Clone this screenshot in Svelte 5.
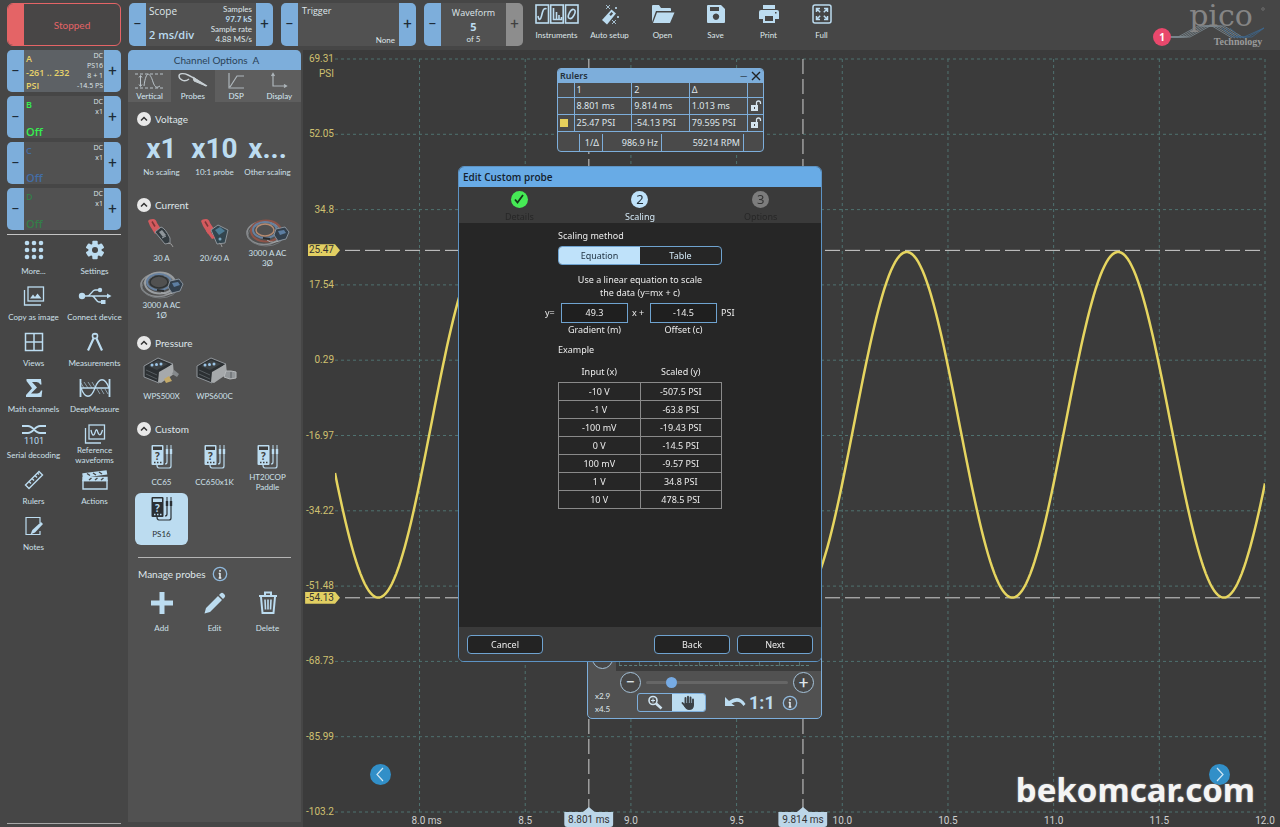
<script>
  const channels = [
    { id: 'A', range: '-261 .. 232', state: 'PSI', info: ['DC', 'PS16', '8 + 1', '-14.5 PS'], color: '#e8d36a', on: true },
    { id: 'B', range: '', state: 'Off', info: ['DC', 'x1'], color: '#37ee50' },
    { id: 'C', range: '', state: 'Off', info: ['DC', 'x1'], color: '#446da6' },
    { id: 'D', range: '', state: 'Off', info: ['DC', 'x1'], color: '#357d49' }
  ];
  const tools = [
    ['instruments', 'Instruments'], ['wand', 'Auto setup'], ['folder', 'Open'],
    ['save', 'Save'], ['print', 'Print'], ['full', 'Full']
  ];
  const side = [
    ['more', 'More...'], ['gear', 'Settings'], ['copy', 'Copy as image'], ['usb', 'Connect device'],
    ['views', 'Views'], ['compass', 'Measurements'], ['sigma', 'Math channels'], ['deep', 'DeepMeasure'],
    ['serial', 'Serial decoding'], ['refwave', 'Reference\nwaveforms'], ['ruler', 'Rulers'],
    ['clapper', 'Actions'], ['notes', 'Notes']
  ];
  const tabs = [['vertical', 'Vertical'], ['probe', 'Probes'], ['dsp', 'DSP'], ['display', 'Display']];
  const sections = [
    { title: 'Voltage', items: [['x1', 'No scaling'], ['x10', '10:1 probe'], ['x...', 'Other scaling']], text: true },
    { title: 'Current', items: [['clampA', '30 A'], ['clampB', '20/60 A'], ['coil3', '3000 A AC\n3Ø'], ['coil1', '3000 A AC\n1Ø']] },
    { title: 'Pressure', items: [['wps5', 'WPS500X'], ['wps6', 'WPS600C']] },
    { title: 'Custom', items: [['meter', 'CC65'], ['meter', 'CC650x1K'], ['meter', 'HT20COP\nPaddle'], ['meter', 'PS16', true]] }
  ];
  const example = [
    ['-10 V', '-507.5 PSI'], ['-1 V', '-63.8 PSI'], ['-100 mV', '-19.43 PSI'], ['0 V', '-14.5 PSI'],
    ['100 mV', '-9.57 PSI'], ['1 V', '34.8 PSI'], ['10 V', '478.5 PSI']
  ];

  const t0 = 7.6, t1 = 12.0;
  const yLabels = ['69.31', '52.05', '34.8', '17.54', '0.29', '-16.97', '-34.22', '-51.48', '-68.73', '-85.99', '-103.2'];
  const xLabels = ['8.0 ms', '8.5', '9.0', '9.5', '10.0', '10.5', '11.0', '11.5', '12.0'];
  const xPos = (t) => ((t - t0) / (t1 - t0)) * 100;
  const yPos = (v) => ((69.31 - v) / (69.31 + 103.2)) * 100;
  const timeRulers = [[8.801, '8.801 ms'], [9.814, '9.814 ms']];
  const valueRulers = [[25.47, '25.47'], [-54.13, '-54.13']];

  let wave = '';
  for (let i = 0; i <= 440; i++) {
    const t = t0 + (i / 440) * (t1 - t0);
    const v = -14.5 - 39.6 * Math.cos((2 * Math.PI * (t - 7.805)));
    wave += (i ? 'L' : 'M') + (xPos(t) * 10).toFixed(2) + ' ' + (yPos(v) * 10).toFixed(2);
  }

  let gradient = $state('49.3');
  let offset = $state('-14.5');
  let zoom = $state(15);
</script>

{#snippet icon(name)}
  {#if name === 'instruments'}
    <svg class="ic" width="44" height="20" viewBox="0 0 44 20" fill="none" stroke="#bcdcf0" stroke-width="1.6">
      <rect x="1" y="1" width="12.5" height="18" /><rect x="15.7" y="1" width="12.5" height="18" /><rect x="30.5" y="1" width="12.5" height="18" />
      <path d="M3 12c1 5 2.500 4 3.500 0s2-9 5-7M18.500 4v12M21.500 8v8M24 11v5M26.500 13v3M18 15.500h9" /><ellipse cx="36.700" cy="10" rx="2.600" ry="5" transform="rotate(28 36.700 10)" />
    </svg>
  {:else if name === 'wand'}
    <svg class="ic" width="20" height="22" viewBox="0 0 20 22" fill="#bcdcf0" stroke="#bcdcf0">
      <path d="M11.500 5.500l4.500 4L7 20.500l-5-4.500z" stroke="none" /><path d="M11.500 8l1.600 1.400-2.200 2.600-1.600-1.400z" fill="#464646" stroke="none" />
      <path d="M6 1l4 4M10 1L6 5M15 3l2 2M17 3l-2 2M12 16l4 4M16 16l-4 4M17 12l2 2M19 12l-2 2" fill="none" stroke-width=".8" />
    </svg>
  {:else if name === 'folder'}
    <svg class="ic" width="24" height="20" viewBox="0 0 24 20" fill="#bcdcf0"><path d="M1 18V2q0-1 1-1h6l2 3h9q1 0 1 1v2H5zM6 8.500h17.500L19 19H2z" /></svg>
  {:else if name === 'save'}
    <svg class="ic" width="20" height="20" viewBox="0 0 20 20"><path fill="#bcdcf0" fill-rule="evenodd" d="M1 2q0-1 1-1h13l4 4v13q0 1-1 1H2q-1 0-1-1zM4 3v4h9V3zM10 9.500a3.200 3.200 0 1 0 .01 0z" /></svg>
  {:else if name === 'print'}
    <svg class="ic" width="20" height="20" viewBox="0 0 20 20"><path fill="#bcdcf0" fill-rule="evenodd" d="M4 1h12v4H4zM2 6h16q2 0 2 2v7h-4v4H4v-4H0V8q0-2 2-2zM6 12v5h8v-5zM16 8v1.500h1.500V8z" /></svg>
  {:else if name === 'full'}
    <svg class="ic" width="20" height="20" viewBox="0 0 20 20" fill="none" stroke="#bcdcf0" stroke-width="1.500"><rect x="1" y="1" width="18" height="18" rx="2" /><path d="M4.500 8V4.500H8M12 4.500h3.500V8M15.500 12v3.500H12M8 15.500H4.500V12M5 5l3.200 3.200M15 5l-3.200 3.200M15 15l-3.200-3.200M5 15l3.200-3.200" /></svg>
  {:else if name === 'more'}
    <svg class="ic" width="20" height="20" viewBox="0 0 20 20" fill="#bcdcf0">{#each [3, 10, 17] as cx}{#each [3, 10, 17] as cy}<circle {cx} {cy} r="2.300" />{/each}{/each}</svg>
  {:else if name === 'gear'}
    <svg class="ic" width="20" height="20" viewBox="0 0 20 20"><g fill="#bcdcf0">{#each [0, 60, 120] as a}<rect x="7.300" y=".8" width="5.400" height="18.400" rx="1" transform="rotate({a} 10 10)" />{/each}<circle cx="10" cy="10" r="6.600" /></g><circle cx="10" cy="10" r="3" fill="#464646" /></svg>
  {:else if name === 'copy'}
    <svg class="ic" width="22" height="20" viewBox="0 0 22 20" fill="none" stroke="#bcdcf0" stroke-width="1.300"><rect x="5" y="1" width="15.500" height="14" /><path d="M1.500 4v15H18" /><path d="M7 12.500l3-4 2 2.500 2.500-3.500 4 5z" fill="#bcdcf0" stroke="none" /></svg>
  {:else if name === 'usb'}
    <svg class="ic" width="34" height="20" viewBox="0 0 34 20" fill="none" stroke="#bcdcf0" stroke-width="1.400"><path d="M4 10h26M9 10c4 0 5-6 8-6h5M14 10c3 0 4 6 7 6h4" /><g fill="#bcdcf0" stroke="none"><circle cx="4" cy="10" r="3.200" /><path d="M29 7.500l4.500 2.500-4.500 2.500z" /><circle cx="22" cy="4" r="2.200" /><rect x="23" y="14" width="4.500" height="4" /></g></svg>
  {:else if name === 'views'}
    <svg class="ic" width="20" height="20" viewBox="0 0 20 20" fill="none" stroke="#bcdcf0" stroke-width="1.500"><path d="M1.500 1.500h17v17h-17zM10 1.500v17M1.500 10h17" /></svg>
  {:else if name === 'compass'}
    <svg class="ic" width="20" height="20" viewBox="0 0 20 20" fill="none" stroke="#bcdcf0" stroke-width="1.600"><circle cx="10" cy="4" r="2.500" /><path d="M8.500 6.500L3 18.500M11.500 6.500L17 18.500" stroke-width="2.200" /><path d="M10 1v2" /></svg>
  {:else if name === 'sigma'}
    <svg class="ic" width="20" height="20" viewBox="0 0 20 20" fill="#bcdcf0"><path d="M2.500 1H17l.5 5.500h-1.300Q15.500 4 12.500 4H8l5 5.500L7 15.500h6q3 0 4-3h1.300L17.500 19H2v-2l6-6.800L2.500 3z" /></svg>
  {:else if name === 'deep'}
    <svg class="ic" width="32" height="20" viewBox="0 0 32 20" fill="none" stroke="#bcdcf0" stroke-width="1.300"><path d="M1.500 1v18M30.500 1v18" stroke-width="1.800" /><path d="M1.500 10h29M2 10c4 11 10 11 14 0S26-1 30 10" /><path d="M5 4l4 6M9 4l4 6M13 4l3 5M18 11l3 5M22 11l3 5M26 11l3 5M2 5l3 5" stroke-width=".6" /></svg>
  {:else if name === 'serial'}
    <svg class="ic" width="26" height="22" viewBox="0 0 26 22" fill="none" stroke="#bcdcf0" stroke-width="1.800"><path d="M1 3h6c5 0 7 7 12 7h6M1 10h6c5 0 7-7 12-7h6" /><text x="13" y="21" text-anchor="middle" font-size="9" font-family="Roboto, sans-serif" fill="#bcdcf0" stroke="none">1101</text></svg>
  {:else if name === 'refwave'}
    <svg class="ic" width="22" height="20" viewBox="0 0 22 20" fill="none" stroke="#bcdcf0" stroke-width="1.300"><rect x="5" y="1" width="15.500" height="14" /><path d="M1.500 4v15H17M7 6c1.500 7 3 6 4.200 2 .8-3 1.800-3 2.600 0 1.200 4 3 4 4.700-2" /></svg>
  {:else if name === 'ruler'}
    <svg class="ic" width="20" height="20" viewBox="0 0 20 20" fill="none" stroke="#bcdcf0" stroke-width="1.400"><path d="M15 1.500l3.500 3.500L5 18.500 1.500 15zM5 11.500l2 2M8 8.500l2 2M11 5.500l2 2M13.500 3l1.500 1.500" /></svg>
  {:else if name === 'clapper'}
    <svg class="ic" width="26" height="20" viewBox="0 0 26 20" fill="none" stroke="#bcdcf0" stroke-width="1.400"><path d="M1 10.500h24v8.500H1z" /><path d="M1 7.500h24v3H1zM1 4l23-3 .5 3L1.500 7z" fill="#bcdcf0" /><path d="M5 3.500l3 2M11 3l3 2M17 2l3 2M7 10l2.500-2M13 10l2.500-2M19 10l2.500-2" stroke="#464646" /></svg>
  {:else if name === 'notes'}
    <svg class="ic" width="20" height="20" viewBox="0 0 20 20" fill="none" stroke="#bcdcf0" stroke-width="1.200"><path d="M16 7V1.500H2v17h14V15" /><path d="M17 6l2 2-8 8.500-4.500 2 1.800-4.500z" fill="#bcdcf0" stroke="none" /></svg>
  {:else if name === 'vertical'}
    <svg class="ic" width="32" height="18" viewBox="0 0 32 18" fill="none" stroke="#b9c2c8"><path d="M1 2h30M1 16h30" stroke-dasharray="3 2" /><path d="M6.500 4v10M5 5.500L6.500 3.500 8 5.500M5 12.500l1.500 2 1.500-2M10 14c2-16 6-14 9-4 2 6 4 6 7 4" /></svg>
  {:else if name === 'probe'}
    <svg class="ic" width="32" height="18" viewBox="0 0 32 18" fill="none" stroke="#c8d0d4"><path d="M12 7C7 11 2 7 2 4s5-3 9-1l6 3 13 8" stroke-width="1.400" /><path d="M16 5l13 9-12-5z" fill="#c8d0d4" /></svg>
  {:else if name === 'dsp'}
    <svg class="ic" width="20" height="18" viewBox="0 0 20 18" fill="none" stroke="#aeb6bb" stroke-width="1.200"><path d="M3 1v15h15M4 15L11 4h7" /></svg>
  {:else if name === 'display'}
    <svg class="ic" width="20" height="18" viewBox="0 0 20 18" fill="none" stroke="#aeb6bb" stroke-width="1.200"><path d="M4 2v12h13M2.500 4L4 1.500 5.500 4M15 12.500l2.500 1.500-2.500 1.500" /></svg>
  {:else if name === 'clampA' || name === 'clampB'}
    <svg class="ic" width="34" height="30" viewBox="0 0 34 30" fill="none">
      <path d="M3 3q1-2 5-2 3 0 4 4l4 6-6 5-5-8z" fill="#d45a5e" /><path d="M7 3.500l3 5" stroke="#7c3638" stroke-width="1.500" />
      {#if name === 'clampA'}
        <path d="M10 14l6-5q4 1 9 11v5l-5 1z" fill="#333b40" stroke="#8e9499" /><path d="M14 14l3-2 4 5-3 2z" fill="#8f969b" /><path d="M17 20l4-2" stroke="#9aa2a8" /><path d="M23 25q4 0 5 4" stroke="#999" />
      {:else}
        <path d="M13 12l7-5 10 5-3 13-8 1z" fill="#33454e" stroke="#8e9499" /><path d="M17 12l5-3 5 4-6 4z" fill="#4d7c95" /><path d="M9 9l8 11-3 1-6-8z" fill="#d45a5e" /><circle cx="22" cy="21" r="1.500" fill="#7ba5bd" /><path d="M21 25q3 1 3 4" stroke="#999" />
      {/if}
    </svg>
  {:else if name === 'coil3' || name === 'coil1'}
    <svg class="ic" width="46" height="30" viewBox="0 0 46 30" fill="none">
      <ellipse cx="19" cy="15" rx="17" ry="11.500" stroke="#8b8e91" stroke-width="1.600" /><ellipse cx="21" cy="17" rx="18" ry="11" stroke="#74787b" />
      <ellipse cx="21" cy="13" rx="15" ry="10.500" stroke={name === 'coil3' ? '#8d5348' : '#999da0'} stroke-width="2" /><ellipse cx="20" cy="12" rx="12" ry="8" stroke="#66809f" stroke-width="2" />
      <ellipse cx="20" cy="12" rx="9" ry="6" stroke={name === 'coil3' ? '#b58a70' : '#2f3335'} stroke-width="1.500" /><path d="M22 22q6 5 16-1" stroke="#a4a7a9" />
      <path d="M31 11l9-2 4 5-3 7-8 2-4-6z" fill="#33404d" stroke="#87919b" /><path d="M33 13l6-1 2 3-6 2z" fill="#5d7ea2" /><path d="M18 20l7 1" stroke="#292c2e" stroke-width="2" />
    </svg>
  {:else if name === 'wps5' || name === 'wps6'}
    <svg class="ic" width="44" height="28" viewBox="0 0 44 28" fill="none">
      <path d="M4 9L18 1l15 6-12 9-2 10L4 20z" fill="#2c3033" stroke="#90959a" /><path d="M19 15l14-8 1 10-13 9-3-1z" fill="#a6a9ab" /><path d="M8 9L18 3l10 4-11 6z" fill="#3d4245" />
      <circle cx="12" cy="8" r="1.500" fill="#9bc4e6" /><circle cx="16.500" cy="7.500" r="1.500" fill="#9bc4e6" /><circle cx="21" cy="7" r="1.500" fill="#9bc4e6" />
      {#if name === 'wps5'}<path d="M34 13l5 4-2 3-5-3z" fill="#85898c" /><path d="M24 22l5-3 3 5-6 2z" fill="#c4aa68" />{:else}<path d="M33 14l5 0 5 1v6l-6 1-6-2z" fill="#93979a" stroke="#b5b8ba" /><path d="M38 15v6" stroke="#5d6164" />{/if}
      <path d="M6 13l11 5M6 17l11 5" stroke="#555b5f" />
    </svg>
  {:else if name === 'meter'}
    <svg class="ic" width="22" height="26" viewBox="0 0 22 26" fill="none" stroke="currentColor">
      <rect x=".5" y="1" width="12" height="20" rx="1" fill="currentColor" stroke="none" /><rect x="2" y="2.500" width="9" height="3.500" fill="var(--cut)" stroke="none" />
      <text x="6.500" y="15.500" text-anchor="middle" font-size="10" font-weight="700" font-family="Open Sans, sans-serif" fill="var(--cut)" stroke="none">?</text>
      <path d="M3 18.500h1.500M6 18.500h1.500M9 18.500h1.500" stroke="var(--cut)" stroke-width="1.500" /><path d="M16 1v6M20 1v6" /><path d="M16 5v5M20 5v5" stroke-width="2.400" />
      <path d="M16 10v8q0 2-2 2M20 10v12q0 2-2 2H8q-2 0-2-3" stroke-width="1.200" />
    </svg>
  {:else if name === 'plus'}
    <svg class="ic" width="22" height="22" viewBox="0 0 22 22"><path d="M8.500 0h5v8.500H22v5h-8.500V22h-5v-8.500H0v-5h8.500z" fill="#bcdcf0" /></svg>
  {:else if name === 'pencil'}
    <svg class="ic" width="22" height="22" viewBox="0 0 22 22" fill="#bcdcf0"><path d="M14 4l4 4L6 20l-5.500 1.500L2 16zM15 3l1.500-1.500Q18 0 19.500 1.500l1 1Q22 4 20.500 5.500L19 7z" /></svg>
  {:else if name === 'bin'}
    <svg class="ic" width="20" height="24" viewBox="0 0 20 24" fill="none" stroke="#bcdcf0" stroke-width="2"><path d="M1 5h18M7 4V1.500h6V4M3 6l1.500 16h11L17 6" /><path d="M7 8.500l.5 10M10 8.500v10M13 8.500l-.5 10" stroke-width="1.600" /></svg>
  {:else if name === 'info'}
    <svg class="ic" width="16" height="16" viewBox="0 0 16 16" fill="none"><circle cx="8" cy="8" r="6.700" stroke="#8fb8dc" stroke-width="1.300" /><path d="M8 7v5M8 4v1.800M6.700 12h2.600M6.700 7.500H8" stroke="#e6eef3" stroke-width="1.500" /></svg>
  {:else if name === 'lock'}
    <svg class="ic" width="12" height="12" viewBox="0 0 12 12"><path d="M1 5h7v6H1z" fill="#d5e4ee" /><path d="M6.500 5V3q0-2 2-2t2 2v1" fill="none" stroke="#d5e4ee" stroke-width="1.300" /><path d="M4.500 7v2" stroke="#444" /></svg>
  {/if}
{/snippet}

{#snippet stepper(dir, label, tone)}
  <button class="step {tone ?? ''}" aria-label={label}>{dir === 'up' ? '+' : '−'}</button>
{/snippet}

<div class="app">
  <header class="top">
    <button class="stopped"><i></i><span>Stopped</span></button>
    <div class="box scope">
      {@render stepper('down', 'Shorter timebase')}
      <div class="scope-main"><span>Scope</span><b>2 ms/div</b></div>
      <div class="scope-info"><span>Samples</span><b>97.7 kS</b><span>Sample rate</span><span>4.88 MS/s</span></div>
      {@render stepper('up', 'Longer timebase')}
    </div>
    <div class="box trigger">
      {@render stepper('down', 'Previous trigger')}
      <div class="trigger-main"><span>Trigger</span><small>None</small></div>
      {@render stepper('up', 'Next trigger')}
    </div>
    <div class="box waveform">
      {@render stepper('down', 'Previous waveform')}
      <div class="waveform-main"><span>Waveform</span><b>5</b><small>of 5</small></div>
      {@render stepper('up', 'Next waveform', 'grey')}
    </div>
    <nav class="tools">
      {#each tools as [name, label]}
        <button class="tool">{@render icon(name)}<span>{label}</span></button>
      {/each}
    </nav>
    <div class="brand">
      <b class="count">1</b>
      <span class="pico">pico</span>
      <svg width="112" height="46" viewBox="0 0 112 46" fill="none">
        <g stroke-width=".8">
          {#each [0, 3, 6, 9, 12] as d}<path d="M8 34H{18 + d}L{38 + d} 23H{52 + d}L{72 + d} 35" stroke="#7e8b93" />{/each}
          {#each [0, 4, 8] as d}<path d="M{62 + d} 25L{72 + d} 34H{84 + d}L104 25" stroke="#3c668c" />{/each}
        </g>
        <text x="78" y="42" text-anchor="middle" font-family="Liberation Serif, serif" font-weight="700" font-size="10" fill="#9a9a9a">Technology</text>
        <circle cx="103" cy="6" r="1.300" stroke="#858585" stroke-width=".6" />
      </svg>
    </div>
  </header>

  <aside class="left">
    <div class="channels">
      {#each channels as c}
        <div class="box channel" class:on={c.on} style="--tone: {c.color}">
          {@render stepper('down', `Channel ${c.id} range down`)}
          <div class="ch-main"><b>{c.id}</b>{#if c.range}<b>{c.range}</b>{/if}<b class:off={c.state === 'Off'}>{c.state}</b></div>
          <div class="ch-info">{#each c.info as line}<span>{line}</span>{/each}</div>
          {@render stepper('up', `Channel ${c.id} range up`)}
        </div>
      {/each}
    </div>
    <nav class="side">
      {#each side as [name, label]}
        <button class="side-item"><span class="side-icon">{@render icon(name)}</span><span class="cap">{label}</span></button>
      {/each}
    </nav>
  </aside>

  <section class="options">
    <h2>Channel Options&nbsp; A</h2>
    <div class="tabs">
      {#each tabs as [name, label]}
        <button class="tab" class:active={name === 'probe'}>{@render icon(name)}<span>{label}</span></button>
      {/each}
    </div>
    <div class="groups">
      {#each sections as s}
        <section>
          <h3><button class="fold" aria-label="Collapse {s.title}"><svg width="14" height="14" viewBox="0 0 14 14"><circle cx="7" cy="7" r="7" fill="#e8e8e8" /><path d="M4 8.500l3-3 3 3" fill="none" stroke="#333" stroke-width="1.500" /></svg></button>{s.title}</h3>
          <div class="items">
            {#each s.items as [name, label, picked]}
              <button class="item" class:picked>
                <span class="item-icon" class:big={s.text}>{#if s.text}{name}{:else}{@render icon(name)}{/if}</span>
                <span class="cap">{label}</span>
              </button>
            {/each}
          </div>
        </section>
      {/each}
    </div>
    <div class="manage">
      <h3>Manage probes {@render icon('info')}</h3>
      <div class="items">
        {#each [['plus', 'Add'], ['pencil', 'Edit'], ['bin', 'Delete']] as [name, label]}
          <button class="item"><span class="item-icon">{@render icon(name)}</span><span class="cap">{label}</span></button>
        {/each}
      </div>
    </div>
  </section>

  <main class="chart">
    <div class="plot">
      <svg class="grid" width="100%" height="100%">
        {#each yLabels as _, i}<line x1="0" x2="100%" y1="{i * 10}%" y2="{i * 10}%" />{/each}
        {#each xLabels as _, i}<line y1="0" y2="100%" x1="{xPos(8 + i / 2)}%" x2="{xPos(8 + i / 2)}%" />{/each}
        {#each valueRulers as [v]}<line class="rule" x1="10" x2="100%" y1="{yPos(v)}%" y2="{yPos(v)}%" />{/each}
        {#each timeRulers as [t]}<line class="rule" y1="0" y2="100%" x1="{xPos(t)}%" x2="{xPos(t)}%" />{/each}
        <svg width="100%" height="100%" viewBox="0 0 1000 1000" preserveAspectRatio="none"><path class="wave" d={wave} /></svg>
      </svg>
      {#each yLabels as l, i}<span class="ylab" style="top: {i * 10}%">{l}</span>{/each}
      <span class="ylab unit">PSI</span>
      {#each valueRulers as [v, l]}<span class="ytag" style="top: {yPos(v)}%">{l}</span>{/each}
      {#each xLabels as l, i}<span class="xlab" class:with-unit={i === 0} style="left: {xPos(8 + i / 2)}%">{l}</span>{/each}
      {#each timeRulers as [t, l]}<span class="xtag" style="left: {xPos(t)}%">{l}</span>{/each}
      <button class="nav prev" aria-label="Previous buffer"><svg width="21" height="21" viewBox="0 0 21 21" fill="none" stroke="#cfe6f4" stroke-width="1.200"><path d="M13 4l-6 6.500 6 6.500" /></svg></button>
      <button class="nav next" aria-label="Next buffer"><svg width="21" height="21" viewBox="0 0 21 21" fill="none" stroke="#cfe6f4" stroke-width="1.200"><path d="M8 4l6 6.500L8 17" /></svg></button>
    </div>

    <section class="rulers">
      <header><b>Rulers</b><button aria-label="Minimise">─</button><button aria-label="Close"><svg width="10" height="10" viewBox="0 0 10 10" stroke="#222" stroke-width="1.400"><path d="M1 1l8 8M9 1L1 9" /></svg></button></header>
      <table>
        <thead><tr><th></th><th>1</th><th>2</th><th>Δ</th><th></th></tr></thead>
        <tbody>
          <tr><td></td><td>8.801 ms</td><td>9.814 ms</td><td>1.013 ms</td><td>{@render icon('lock')}</td></tr>
          <tr><td><i class="swatch"></i></td><td>25.47 PSI</td><td>-54.13 PSI</td><td>79.595 PSI</td><td>{@render icon('lock')}</td></tr>
        </tbody>
      </table>
      <div class="freq"><span>1/Δ</span><span>986.9 Hz</span><span>59214 RPM</span></div>
    </section>

    <section class="zoomer">
      <div class="preview"><button class="ring" aria-label="Reset vertical zoom"></button><div class="overview"></div></div>
      <div class="zoom-row">
        <button class="ring" aria-label="Zoom out">−</button>
        <input type="range" min="0" max="100" aria-label="Zoom" bind:value={zoom} />
        <button class="ring" aria-label="Zoom in">+</button>
      </div>
      <div class="zoom-foot">
        <div class="factors"><span>x2.9</span><span>x4.5</span></div>
        <div class="modes">
          <button aria-label="Magnify"><svg width="16" height="16" viewBox="0 0 16 16" fill="none" stroke="#cfe3f0" stroke-width="1.600"><circle cx="6" cy="5.500" r="4" /><path d="M9 8.500l5.500 5" stroke-width="2.600" /><path d="M4 5.500h4M6 3.500v4" stroke-width="1" /></svg></button>
          <button class="active" aria-label="Pan"><svg width="16" height="16" viewBox="0 0 16 16" fill="none" stroke="#3b4146" stroke-width="1.900" stroke-linecap="round"><path d="M5.500 8V3M8 7.500V1.800M10.500 8V2.500M13 9V4.500M2.500 8l2.500 3" /><path d="M4.500 8h9.500v2q0 5-5 5Q6 15 4 11z" fill="#3b4146" stroke="none" /></svg></button>
        </div>
        <button class="undo" aria-label="Undo zoom"><svg width="22" height="14" viewBox="0 0 22 14"><path d="M1 1v9h10L7.500 7.500Q15 3 19.500 10l2-2Q15-2 5 5z" fill="#bcdcf0" /></svg></button>
        <button class="one">1:1</button>
        {@render icon('info')}
      </div>
    </section>
  </main>

  <div class="watermark">bekomcar.com</div>
</div>

<div class="layer">
  <div class="dialog" role="dialog" aria-labelledby="dlg-title">
    <h2 id="dlg-title">Edit Custom probe</h2>
    <ol class="steps">
      <li><span class="dot done"><svg width="12" height="12" viewBox="0 0 12 12" fill="none" stroke="#123b18" stroke-width="1.800"><path d="M2 6.500L4.500 9.500 10 2" /></svg></span><em>Details</em></li>
      <li><span class="dot now">2</span><strong>Scaling</strong></li>
      <li><span class="dot">3</span><em>Options</em></li>
    </ol>
    <div class="content">
      <p>Scaling method</p>
      <div class="switch"><button class="active">Equation</button><button>Table</button></div>
      <p class="hint">Use a linear equation to scale<br />the data (y=mx + c)</p>
      <div class="equation">
        <span class="pre">y=</span>
        <input id="gradient" bind:value={gradient} />
        <span class="mid">x +</span>
        <input id="offset" bind:value={offset} />
        <span>PSI</span>
        <label for="gradient" class="l1">Gradient (m)</label>
        <label for="offset" class="l2">Offset (c)</label>
      </div>
      <p class="example">Example</p>
      <table>
        <thead><tr><th>Input (x)</th><th>Scaled (y)</th></tr></thead>
        <tbody>{#each example as [a, b]}<tr><td>{a}</td><td>{b}</td></tr>{/each}</tbody>
      </table>
    </div>
    <footer><button>Cancel</button><span></span><button>Back</button><button>Next</button></footer>
  </div>
</div>

<style>
  :global(body) { background: #464646; }
  * { box-sizing: border-box; }
  .app, .layer { font-family: 'Open Sans', 'Noto Sans', sans-serif; color: #dfe6ea; }
  button, input { font: inherit; color: inherit; }
  button { background: none; border: 0; padding: 0; cursor: pointer; }
  h2, h3, p, ol { margin: 0; padding: 0; font-weight: 400; }
  .ic { display: block; flex: none; }

  .app { position: relative; min-height: 100vh; display: grid; grid-template: 50px 1fr / 128px 175px 1fr; background: #464646; }
  .top { grid-column: 1 / -1; display: flex; align-items: flex-start; padding: 3px 8px 0 7px; gap: 8px; }

  .stopped { width: 114px; height: 43px; display: flex; align-items: stretch; border: 1px solid #e46466; border-radius: 6px; overflow: hidden; color: #e46466; font: 10px/14px Lato, sans-serif; background: #484646; }
  .stopped i { width: 16px; background: #e46466; }
  .stopped span { flex: 1; align-self: center; }

  .box { display: flex; border-radius: 5px; overflow: hidden; background: #515151; }
  .top .box { height: 43px; }
  .step { width: 17px; flex: none; background: #7daedb; color: #1e2c38; font: 15px/15px Roboto, sans-serif; }
  .step.grey { background: #8d8d8d; color: #404040; }
  .scope { width: 144px; }
  .scope-main { flex: 1; display: flex; flex-direction: column; justify-content: space-between; padding: 1px 0 4px 3px; font-size: 10px; line-height: 15px; white-space: nowrap; }
  .scope-main b { font-size: 11px; font-weight: 600; color: #bcdcf0; }
  .scope-info { display: flex; flex-direction: column; align-items: flex-end; padding: 1px 4px 0 0; font: 8px/10px Lato, sans-serif; white-space: nowrap; }
  .scope-info b { color: #bcdcf0; }
  .trigger { width: 135px; }
  .trigger-main { flex: 1; display: flex; flex-direction: column; justify-content: space-between; padding: 0 4px; font-size: 9px; line-height: 15px; }
  .trigger-main small { align-self: flex-end; font: 8px/12px Lato, sans-serif; }
  .waveform { width: 99px; }
  .waveform-main { flex: 1; display: flex; flex-direction: column; align-items: center; font-size: 9px; line-height: 15px; padding-top: 2px; }
  .waveform-main b { font-size: 11px; line-height: 13px; color: #bcdcf0; }
  .waveform-main small { font: 8px/12px Lato, sans-serif; }

  .tools { display: flex; margin-left: -1px; }
  .tool { width: 53px; display: flex; flex-direction: column; align-items: center; height: 37px; justify-content: space-between; font: 8px/10px Lato, sans-serif; padding-top: 1px; white-space: nowrap; }
  .brand { margin-left: auto; display: flex; position: relative; }
  .count { position: absolute; left: -7px; top: 25px; width: 18px; height: 18px; border-radius: 50%; background: #e9486c; color: #fff; font-size: 10px; line-height: 18px; text-align: center; }
  .pico { position: absolute; left: 0; right: -10px; top: -3px; text-align: center; font: 30px/32px 'DejaVu Serif', serif; color: #858585; }

  .left { display: flex; flex-direction: column; padding: 0 7px 3px; }
  .channels { display: flex; flex-direction: column; gap: 4px; padding-bottom: 4px; border-bottom: 1px solid #c4c4c4; }
  .channel { height: 42px; position: relative; }
  .channel.on { background: #5d6165; }
  .ch-main { flex: 1; display: flex; flex-direction: column; justify-content: space-between; padding: 2px 0 0 2px; color: var(--tone); font-size: 9px; line-height: 13px; white-space: nowrap; }
  .ch-main b { font-weight: 600; }
  .ch-main .off { font-size: 11px; }
  .ch-info { position: absolute; right: 18px; top: 1px; display: flex; flex-direction: column; align-items: flex-end; font-size: 7px; line-height: 10px; }
  .side { flex: 1; margin: 0 -4px; padding-top: 4px; display: grid; grid-template-columns: 1fr 1fr; grid-auto-rows: 46px; align-content: start; }
  .left::after { content: ''; border-top: 1px solid #a8a8a8; }
  .side-item { display: flex; flex-direction: column; align-items: center; min-width: 0; }
  .side-icon { height: 22px; display: flex; align-items: center; }
  .cap { display: flex; align-items: center; justify-content: center; height: 20px; font: 8px/10px Lato, sans-serif; color: #cfe0ea; text-align: center; white-space: pre; }

  .options { display: flex; flex-direction: column; background: #515151; border-radius: 5px 5px 0 0; margin: 0 2px 5px 0; overflow: hidden; }
  .options h2 { background: #7daedb; color: #2b4257; text-align: center; font: 10px/20px Lato, sans-serif; padding-left: 4px; }
  .tabs { display: grid; grid-template-columns: repeat(4, 1fr); height: 32px; }
  .tab { display: flex; flex-direction: column; align-items: center; justify-content: space-between; padding: 2px 0 1px; background: #5e5e5e; font: 8px/10px Lato, sans-serif; color: #d6e8f3; }
  .tab.active { background: #515151; }
  .groups { display: flex; flex-direction: column; gap: 10px; padding: 5px 7px 0; }
  h3 { display: flex; align-items: center; gap: 4px; height: 24px; font: 10px/14px Lato, sans-serif; padding-left: 2px; }
  .fold { display: flex; }
  .items { display: grid; grid-template-columns: repeat(3, 53px); }
  .item { height: 52px; display: flex; flex-direction: column; align-items: center; justify-content: space-between; padding-bottom: 1px; border-radius: 6px; color: #bcdcf0; --cut: #3c3c3c; }
  .item-icon { height: 31px; display: flex; align-items: center; }
  .item-icon.big { font: 700 28px/34px Roboto, sans-serif; padding-top: 4px; white-space: nowrap; }
  .item.picked { background: #bcdcf0; color: #2b3034; --cut: #bcdcf0; }
  .item.picked .cap { color: #2b3034; }
  .manage { margin: 12px 10px 0; border-top: 1px solid #b5b5b5; padding-top: 4px; }
  .manage h3 { padding: 0; gap: 6px; }
  .manage .items { margin-left: -3px; padding-top: 1px; }

  .chart { position: relative; background: #3b3b3b; padding: 9px 15px 15px 32px; display: flex; }
  .plot { position: relative; flex: 1; }
  .grid { position: absolute; inset: 0; overflow: visible; }
  .grid line { stroke: #4f7270; stroke-width: 1; stroke-dasharray: 3 3; }
  .grid .rule { stroke: #d0d0d0; stroke-dasharray: 15 5; }
  .wave { fill: none; stroke: #e6d560; stroke-width: 2.5; vector-effect: non-scaling-stroke; }
  .ylab { position: absolute; right: 100%; margin-right: 1px; transform: translateY(-50%); color: #cfc070; font: 10px/12px Roboto, sans-serif; }
  .unit { top: 15px; }
  .ytag { position: absolute; right: 100%; margin-right: -5px; transform: translateY(-50%); padding: 0 6px 0 1px; background: #e2cf62; color: #333; font: 10px/12px Roboto, sans-serif; clip-path: polygon(0 0, calc(100% - 5px) 0, 100% 50%, calc(100% - 5px) 100%, 0 100%); }
  .xlab { position: absolute; top: 100%; transform: translateX(-50%); font: 10px/18px Roboto, sans-serif; color: #cfcfcf; white-space: nowrap; }
  .with-unit { margin-left: 7px; }
  .xtag { position: absolute; bottom: -15px; transform: translateX(-50%); padding: 5px 4px 0; border-radius: 3px; background: #bcd6e8; color: #333; font: 10px/15px Roboto, sans-serif; white-space: nowrap; clip-path: polygon(0 5px, calc(50% - 6px) 5px, 50% 0, calc(50% + 6px) 5px, 100% 5px, 100% 100%, 0 100%); }
  .nav { position: absolute; bottom: 27px; width: 21px; height: 21px; border-radius: 50%; background: #318fc8; display: flex; }
  .prev { left: 35px; }
  .next { right: 35px; }

  .rulers { position: absolute; left: 254px; top: 18px; width: 207px; background: #4a4a4a; border: 1px solid #7daedb; border-radius: 4px; overflow: hidden; font: 9px/14px 'Noto Sans', sans-serif; }
  .rulers header { display: flex; align-items: center; gap: 4px; height: 14px; padding: 0 2px; background: #7daedb; color: #24313c; }
  .rulers header b { flex: 1; font-weight: 600; }
  .rulers header svg { display: block; }
  .rulers table { width: 100%; table-layout: fixed; border-collapse: collapse; border-bottom: 1px solid #7daedb; }
  .rulers th, .rulers td { border-left: 1px solid #7daedb; border-top: 1px solid #7daedb; padding: 0 0 0 2px; height: 17px; text-align: left; font-weight: 400; white-space: nowrap; }
  .rulers th { height: 14px; border-top: 0; }
  .rulers th:first-child { width: 16px; }
  .rulers th:last-child { width: 16px; }
  .rulers th:first-child, .rulers td:first-child { border-left: 0; }
  .swatch { display: block; width: 8px; height: 8px; background: #e6d05c; }
  .freq { display: grid; grid-template-columns: 24px 59px 82px; margin: 2px 20px 0 21px; height: 17px; line-height: 17px; }
  .freq span { border-right: 1px solid #7daedb; text-align: right; padding-right: 3px; }
  .freq span:first-child { border-left: 1px solid #7daedb; }

  .zoomer { position: absolute; left: 284px; bottom: 108px; width: 235px; padding: 0 7px 6px; background: #515151; border: 1px solid #7daedb; border-radius: 0 0 5px 5px; }
  .preview { display: flex; align-items: flex-end; height: 60px; margin-right: -7px; padding-bottom: 2px; gap: 6px; background: linear-gradient(90deg, #515151 21px, #3b3b3b 21px); }
  .overview { flex: 1; height: 50px; margin-right: 12px; margin-bottom: 3px; border-bottom: 1px dashed #5f7f80; background: repeating-linear-gradient(90deg, #56706e 0 1px, transparent 1px 20px); }
  .ring { width: 21px; height: 21px; border: 1px solid #a6c3da; border-radius: 50%; background: #474747; font: 17px/17px Roboto, sans-serif; flex: none; }
  .preview .ring { margin-left: -3px; }
  .zoom-row { display: flex; align-items: center; gap: 5px; padding-left: 25px; height: 22px; }
  .zoom-row input { flex: 1; min-width: 0; appearance: none; height: 12px; background: none; margin: 0; }
  input[type='range']::-webkit-slider-runnable-track { height: 3px; background: #666; border-radius: 2px; }
  input[type='range']::-webkit-slider-thumb { appearance: none; width: 11px; height: 11px; margin-top: -4px; border-radius: 50%; background: #77abe4; }
  .zoom-foot { display: flex; align-items: center; height: 19px; }
  .factors { width: 42px; display: flex; flex-direction: column; font: 8px/13px Lato, sans-serif; }
  .modes { display: flex; width: 69px; height: 19px; border: 1px solid #7daedb; border-radius: 3px; overflow: hidden; }
  .modes button { flex: 1; display: flex; align-items: center; justify-content: center; }
  .modes .active { background: #bcdcf0; }
  .undo { margin: 0 3px 0 18px; display: flex; }
  .one { font: 700 18px/18px Roboto, sans-serif; color: #bcdcf0; margin-right: 7px; }

  .watermark { position: absolute; right: 25px; bottom: 15px; font: 700 33px/44px 'Noto Sans', sans-serif; color: #f4f4f4; text-shadow: 0 0 2px #888; }

  .layer { position: fixed; inset: 0; display: flex; align-items: center; justify-content: center; }
  .dialog { width: 364px; display: flex; flex-direction: column; min-height: 496px; background: #262626; border: 1px solid #5d93c4; border-radius: 6px; overflow: hidden; font: 9px/13px 'Noto Sans', sans-serif; color: #ececec; }
  .dialog h2 { background: #68abe6; color: #14212d; font: 600 10px/20px 'Open Sans', sans-serif; padding-left: 4px; }
  .steps { display: grid; grid-template-columns: 1fr 1fr 1fr; height: 36px; background: #3a3a3a; list-style: none; }
  .steps li { display: flex; flex-direction: column; align-items: center; padding-top: 4px; gap: 2px; }
  .steps em { font-style: normal; color: #272727; }
  .steps strong { font-weight: 400; color: #d3e8f6; }
  .dot { width: 17px; height: 17px; border-radius: 50%; background: #7c7c7c; color: #333; display: flex; align-items: center; justify-content: center; font-size: 13px; line-height: 17px; }
  .dot.done { background: #46ea55; }
  .dot.now { background: #bfe2fa; color: #1f2b34; }
  .content { flex: 1; width: 164px; margin: 0 auto; padding-top: 6px; }
  .switch { display: grid; grid-template-columns: 1fr 1fr; height: 19px; margin-top: 4px; border: 1px solid #6fa3d0; border-radius: 4px; overflow: hidden; color: #d3e8f6; }
  .switch .active { background: #bfe2fa; color: #1f3140; }
  .hint { text-align: center; margin-top: 8px; white-space: nowrap; }
  .equation { display: grid; grid-template-columns: 12px 67px 14px 67px auto; column-gap: 4px; margin: 4px -20px 0 -13px; align-items: center; white-space: nowrap; }
  .equation input { width: 100%; height: 20px; padding: 0; text-align: center; background: #1f1f1f; border: 1px solid #6fa3d0; }
  .equation label { text-align: center; }
  .l1 { grid-column: 2; }
  .l2 { grid-column: 4; }
  .example { margin-top: 7px; }
  .content table { width: 100%; table-layout: fixed; border-collapse: collapse; margin-top: 6px; }
  .content th { font-weight: 400; height: 21px; padding: 0; }
  .content td { height: 18px; padding: 0; text-align: center; border: 1px solid #8a8a8a; }
  .dialog footer { display: flex; gap: 7px; padding: 8px; height: 34px; background: #3a3a3a; }
  .dialog footer span { flex: 1; }
  .dialog footer button { width: 76px; height: 19px; border: 1px solid #6fa3d0; border-radius: 4px; background: #232323; }
</style>
